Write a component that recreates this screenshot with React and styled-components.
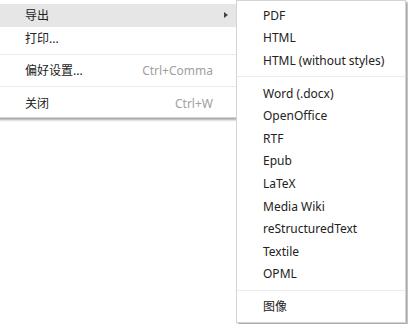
import React from "react";
import styled, { createGlobalStyle } from "styled-components";

const Global = createGlobalStyle`
  html, body { margin: 0; padding: 0; background: #fff; }
  body {
    font-family: "Noto Sans", "Noto Sans CJK SC", sans-serif;
    font-size: 12px;
    color: #222;
    width: 408px;
    height: 324px;
    overflow: hidden;
  }
`;

const Stage = styled.div`
  display: flex;
  align-items: flex-start;
`;

const Menu = styled.div`
  background: #fff;
  border: 1px solid #d4d4d4;
  box-shadow: 2px 2px 2px rgba(0, 0, 0, 0.35);
  box-sizing: border-box;
  padding: ${(p) => p.$pad};
  width: ${(p) => p.$width}px;
  margin-left: ${(p) => p.$offset || 0}px;
  margin-top: ${(p) => p.$top || 0}px;
  position: relative;
  z-index: ${(p) => p.$z || 0};
`;

const Item = styled.div`
  height: 22.6px;
  display: flex;
  align-items: center;
  padding: 0 ${(p) => p.$right}px 0 ${(p) => p.$left}px;
  background: ${(p) => (p.$active ? "#e6e6e6" : "transparent")};
  white-space: nowrap;
`;

const Label = styled.span`
  flex: 1;
`;

const Shortcut = styled.span`
  color: #a0a0a0;
`;

const Arrow = styled.span`
  width: 0;
  height: 0;
  border-top: 3.5px solid transparent;
  border-bottom: 3.5px solid transparent;
  border-left: 4.5px solid #444;
`;

const Separator = styled.div`
  height: ${(p) => p.$h}px;
  display: flex;
  align-items: center;
  &::after {
    content: "";
    flex: 1;
    height: 1px;
    background: #ebebeb;
  }
`;

const main = [
  { label: "导出", submenu: true, active: true },
  { label: "打印..." },
  { sep: true },
  { label: "偏好设置...", shortcut: "Ctrl+Comma" },
  { sep: true },
  { label: "关闭", shortcut: "Ctrl+W" },
];

const sub = [
  "PDF",
  "HTML",
  "HTML (without styles)",
  null,
  "Word (.docx)",
  "OpenOffice",
  "RTF",
  "Epub",
  "LaTeX",
  "Media Wiki",
  "reStructuredText",
  "Textile",
  "OPML",
  null,
  "图像",
];

export default function App() {
  return (
    <>
      <Global />
      <Stage>
        <Menu $width={242} $offset={-4} $top={-1} $pad="4px 0 3px 0" $z={1}>
          {main.map((m, i) =>
            m.sep ? (
              <Separator key={i} $h={10} />
            ) : (
              <Item key={i} $active={m.active} $left={28} $right={m.submenu ? 9 : 24}>
                <Label>{m.label}</Label>
                {m.shortcut && <Shortcut>{m.shortcut}</Shortcut>}
                {m.submenu && <Arrow />}
              </Item>
            )
          )}
        </Menu>
        <Menu $width={170} $offset={-2} $pad="3px 0 4px 0" $z={2}>
          {sub.map((s, i) =>
            s === null ? (
              <Separator key={i} $h={10} />
            ) : (
              <Item key={i} $left={26} $right={10}>
                <Label>{s}</Label>
              </Item>
            )
          )}
        </Menu>
      </Stage>
    </>
  );
}
